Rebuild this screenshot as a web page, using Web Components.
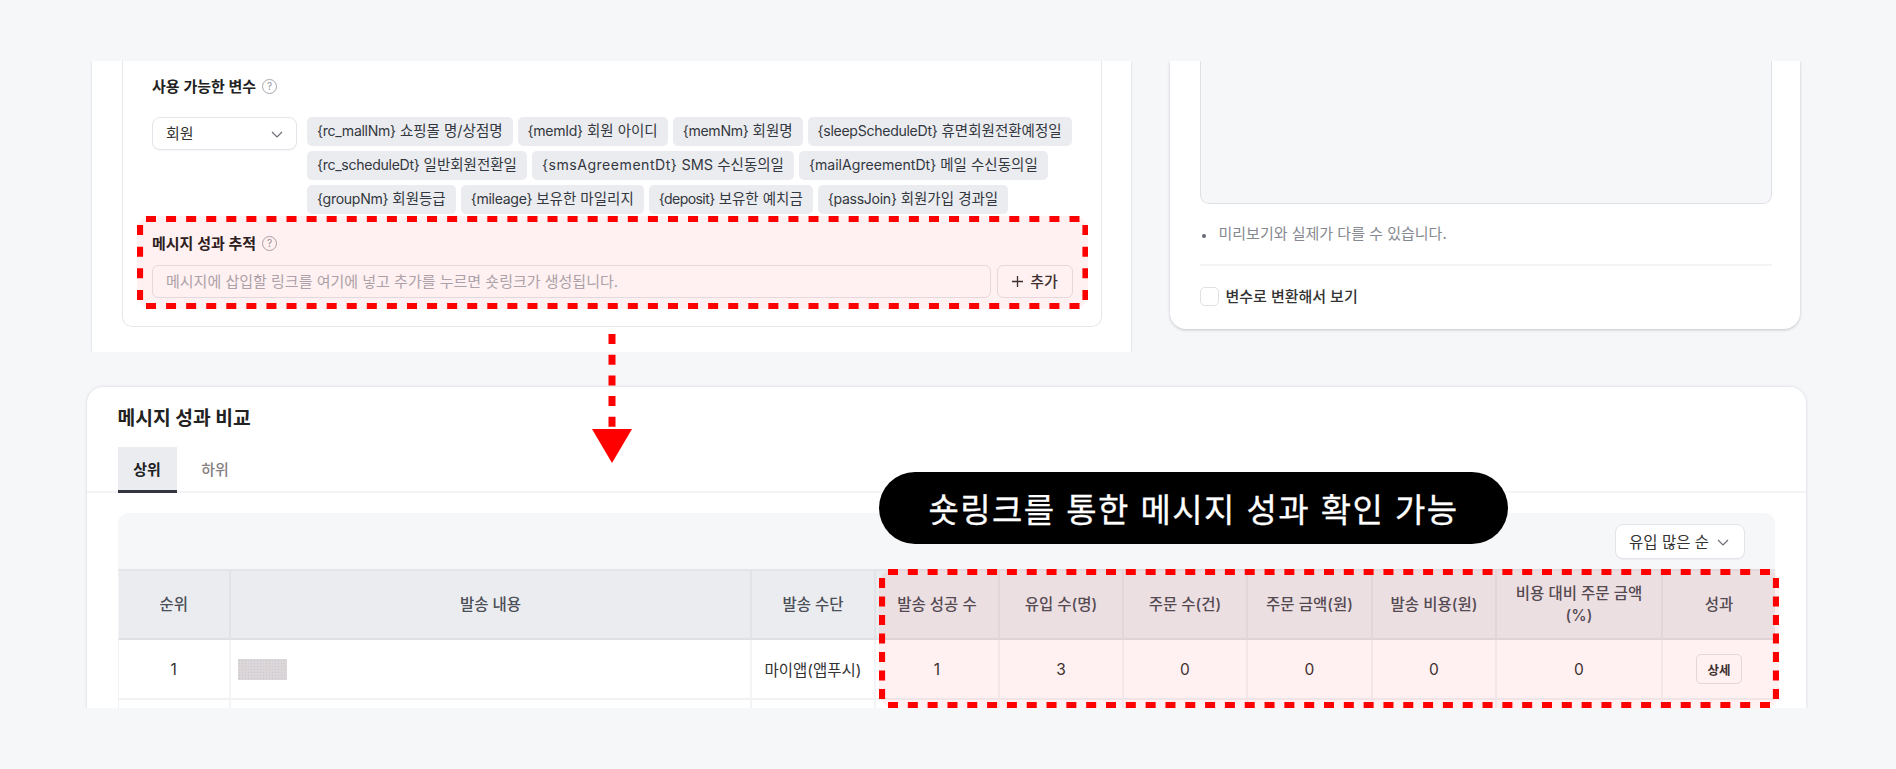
<!DOCTYPE html>
<html lang="ko">
<head>
<meta charset="utf-8">
<title>메시지 성과</title>
<style>
  html, body { margin: 0; height: 769px; overflow: hidden; background: #f6f7f9; }
  body { font-family: "Inter", "Noto Sans CJK KR", sans-serif; color: #222; }
</style>
</head>
<body>
<guide-page>
  <section-card slot="left" variant="flush">
    <vars-panel></vars-panel>
  </section-card>
  <section-card slot="right" variant="preview">
    <preview-panel></preview-panel>
  </section-card>
  <section-card slot="bottom" variant="clip">
    <compare-panel></compare-panel>
  </section-card>

  <dash-box slot="over" style="left:136.5px;top:216px" w="951.5" h="93"></dash-box>
  <dash-box slot="over" style="left:879px;top:569px" w="900" h="139"></dash-box>
  <flow-arrow slot="over" style="left:592px;top:334px"></flow-arrow>
  <callout-pill slot="over" style="left:879px;top:472px">숏링크를 통한 메시지 성과 확인 가능</callout-pill>
</guide-page>

<script>
class GuidePage extends HTMLElement {
  constructor() {
    super();
    this.attachShadow({mode: 'open'});
    this.shadowRoot.innerHTML = `
      <style>
        :host { display: block; position: relative; width: 1896px; height: 769px; overflow: hidden; padding-top: 61px; box-sizing: border-box; }
        .top { display: flex; gap: 39px; align-items: flex-start; padding-left: 92px; }
        .bottom { margin: 35px 0 0 86.5px; }
      </style>
      <div class="top">
        <slot name="left"></slot>
        <slot name="right"></slot>
      </div>
      <div class="bottom"><slot name="bottom"></slot></div>
      <slot name="over"></slot>
    `;
  }
}

class SectionCard extends HTMLElement {
  constructor() {
    super();
    this.attachShadow({mode: 'open'});
    this.shadowRoot.innerHTML = `
      <style>
        :host { display: block; box-sizing: border-box; background: #fff; }
        :host([variant="flush"]) { width: 1039px; height: 291px; box-shadow: 0 0 2px rgba(60,70,90,.22); clip-path: inset(0 -4px); }
        :host([variant="preview"]) { width: 630px; height: 268px; border-radius: 0 0 16px 16px; box-shadow: 0 1px 3px rgba(60,70,90,.28); clip-path: inset(0 -4px -6px); }
        :host([variant="clip"]) { width: 1719.5px; height: 321px; border-radius: 16px 16px 0 0; box-shadow: 0 0 3px rgba(60,70,90,.2); clip-path: inset(-4px -4px 0); overflow: hidden; }
      </style>
      <slot></slot>
    `;
  }
}

class HelpIcon extends HTMLElement {
  constructor() {
    super();
    this.attachShadow({mode: 'open'});
    this.shadowRoot.innerHTML = `
      <style>
        :host { display: inline-flex; align-items: center; justify-content: center; box-sizing: border-box; width: 15px; height: 15px; border: 1px solid #a3a7ae; border-radius: 50%; color: #8f939b; font-size: 10px; font-weight: 400; line-height: 1; }
      </style>?`;
  }
}

class DropSelect extends HTMLElement {
  constructor() {
    super();
    this.attachShadow({mode: 'open'});
    this.shadowRoot.innerHTML = `
      <style>
        :host { display: flex; align-items: center; justify-content: space-between; box-sizing: border-box; background: #fff; border: 1px solid #e4e5ea; border-radius: 8px; font-size: 15px; color: #333; box-shadow: 0 1px 1px rgba(60,70,90,.05); white-space: nowrap; }
        span { position: relative; top: -1px; }
        svg { width: 12px; height: 12px; fill: none; stroke: #666a72; stroke-width: 1.1; flex: none; }
      </style>
      <span><slot></slot></span>
      <svg viewBox="0 0 12 12"><path d="M1 4l5 5 5-5"/></svg>
    `;
  }
}

class VarChip extends HTMLElement {
  constructor() {
    super();
    this.attachShadow({mode: 'open'});
  }
  connectedCallback() {
    this.shadowRoot.innerHTML = `
      <style>
        :host { display: inline-block; box-sizing: border-box; height: 29px; padding: 0 10px; line-height: 27px; font-size: 14.500px; background: #ebecf0; border-radius: 5px; color: #333840; white-space: nowrap; }
        span { font-size: 14.100px; letter-spacing: var(--code-spacing, -.3px); }
      </style>
      <span>${this.getAttribute('code')}</span> <slot></slot>
    `;
  }
}

class VarsPanel extends HTMLElement {
  constructor() {
    super();
    this.attachShadow({mode: 'open'});
    const chips = [
      ['{rc_mallNm}', '쇼핑몰 명/상점명'], ['{memId}', '회원 아이디'], ['{memNm}', '회원명'], ['{sleepScheduleDt}', '휴면회원전환예정일'],
      ['{rc_scheduleDt}', '일반회원전환일'], ['{smsAgreementDt}', 'SMS 수신동의일', '.5px'], ['{mailAgreementDt}', '메일 수신동의일', '0'],
      ['{groupNm}', '회원등급'], ['{mileage}', '보유한 마일리지'], ['{deposit}', '보유한 예치금', '-.6px'], ['{passJoin}', '회원가입 경과일']
    ].map(c => `<var-chip code="${c[0]}"${c[2] ? ` style="--code-spacing:${c[2]}"` : ''}>${c[1]}</var-chip>`).join('');
    this.shadowRoot.innerHTML = `
      <style>
        :host { display: block; box-sizing: border-box; margin-left: 30px; width: 980px; height: 266px; padding: 14px 29px 0; border: 1px solid #e6e7eb; border-top: 0; border-radius: 0 0 10px 10px; }
        .label { display: flex; align-items: center; gap: 6px; height: 20px; font-size: 15px; font-weight: 600; color: #222; }
        help-icon { position: relative; top: 1px; }
        .vars { display: flex; gap: 10px; margin-top: 22px; }
        drop-select { width: 145px; height: 33px; padding: 0 13px; flex: none; }
        .chips { display: flex; flex-wrap: wrap; gap: 5px; width: 785px; }
        .msg { margin-top: 18px; }
        .field { display: flex; gap: 6px; margin-top: 13px; }
        .input { flex: none; width: 839px; height: 33px; box-sizing: border-box; padding: 0 13px 2px; display: flex; align-items: center; border: 1px solid #e4e5ea; border-radius: 6px; font-size: 15px; color: #a8abb2; }
        .add { flex: none; width: 76px; height: 33px; box-sizing: border-box; display: flex; align-items: center; justify-content: center; gap: 7px; padding-bottom: 2px; border: 1px solid #e4e5ea; border-radius: 6px; font-size: 15px; font-weight: 500; color: #333; }
        .add svg { width: 11px; height: 11px; stroke: #333; stroke-width: 1.3; margin-top: 2px; }
      </style>
      <div class="label">사용 가능한 변수 <help-icon></help-icon></div>
      <div class="vars">
        <drop-select>회원</drop-select>
        <div class="chips">${chips}</div>
      </div>
      <div class="msg">
        <div class="label">메시지 성과 추적 <help-icon></help-icon></div>
        <div class="field">
          <div class="input">메시지에 삽입할 링크를 여기에 넣고 추가를 누르면 숏링크가 생성됩니다.</div>
          <div class="add"><svg viewBox="0 0 11 11"><path d="M5.500 0v11M0 5.500h11"/></svg>추가</div>
        </div>
      </div>
    `;
  }
}

class PreviewPanel extends HTMLElement {
  constructor() {
    super();
    this.attachShadow({mode: 'open'});
    this.shadowRoot.innerHTML = `
      <style>
        :host { display: block; padding: 0 28.5px 0 29.500px; }
        .frame { height: 143px; background: #f6f7f9; border: 1px solid #dfe1e5; border-top: 0; border-radius: 0 0 9px 9px; box-sizing: border-box; }
        ul { margin: 20px 0 0; padding: 0; list-style: none; height: 20px; }
        li { position: relative; padding-left: 19px; font-size: 15px; line-height: 20px; color: #85888f; }
        li::before { content: ""; position: absolute; left: 2px; top: 10px; width: 4px; height: 4px; border-radius: 50%; background: #666a72; }
        hr { border: 0; height: 2px; background: #f3f4f6; margin: 20px 0 19px; }
        label { display: flex; align-items: center; gap: 7px; font-size: 15px; font-weight: 500; color: #333; height: 20px; }
        i { display: block; width: 19px; height: 19px; box-sizing: border-box; border: 1px solid #dfe1e5; border-radius: 5px; background: #fff; position: relative; top: 1px; }
      </style>
      <div class="frame"></div>
      <ul><li>미리보기와 실제가 다를 수 있습니다.</li></ul>
      <hr>
      <label><i></i>변수로 변환해서 보기</label>
    `;
  }
}

class PerfTable extends HTMLElement {
  constructor() {
    super();
    this.attachShadow({mode: 'open'});
    const heads = ['순위', '발송 내용', '발송 수단', '발송 성공 수', '유입 수(명)', '주문 수(건)', '주문 금액(원)', '발송 비용(원)', '비용 대비 주문 금액 (%)', '성과'];
    const widths = [113.5, 521, 124, 124, 124, 124, 125, 124, 166, 112];
    const row = ['1', '<span class="mask"></span>', '마이앱(앱푸시)', '1', '3', '0', '0', '0', '0', '<span class="detail">상세</span>'];
    const col = widths.map(w => `<col style="width:${w}px">`).join('');
    this.shadowRoot.innerHTML = `
      <style>
        :host { display: block; }
        table { table-layout: fixed; border-collapse: separate; border-spacing: 0; width: 1657.5px; }
        th { height: 71px; box-sizing: border-box; padding: 0 8px; background: #ebecf0; border-top: 2px solid #e4e5e9; border-bottom: 2px solid #dfe0e5; border-right: 2px solid #e2e3e7; font-size: 15.500px; font-weight: 500; line-height: 22px; color: #4b4f57; text-align: center; }
        td { height: 60px; box-sizing: border-box; padding: 0 6px; background: #fff; border-bottom: 2px solid #f1f2f4; border-right: 2px solid #f3f4f6; font-size: 15.500px; color: #333; text-align: center; }
        td.left { text-align: left; padding-left: 7px; }
        tr > :first-child { border-left: 1px solid #f1f2f4; }
        tr > :last-child { border-right: 0; }
        .mask { display: block; width: 49px; height: 21px; background-color: #dcd6d9; background-image: radial-gradient(#c3cad6 .6px, transparent .7px); background-size: 3px 3px; }
        .detail { display: inline-flex; align-items: center; justify-content: center; width: 46px; height: 30px; box-sizing: border-box; border: 1px solid #e2e3e7; border-radius: 5px; background: #fff; font-size: 12.500px; font-weight: 600; color: #333; vertical-align: middle; }
      </style>
      <table>
        <colgroup>${col}</colgroup>
        <tr>${heads.map(h => `<th>${h}</th>`).join('')}</tr>
        <tr>${row.map((c, i) => `<td class="${i === 1 ? 'left' : ''}">${c}</td>`).join('')}</tr>
        <tr>${row.map(() => '<td></td>').join('')}</tr>
      </table>
    `;
  }
}

class ComparePanel extends HTMLElement {
  constructor() {
    super();
    this.attachShadow({mode: 'open'});
    this.shadowRoot.innerHTML = `
      <style>
        :host { display: block; }
        h2 { margin: 0; padding: 18px 0 0 31px; height: 60px; box-sizing: border-box; font-size: 19.300px; line-height: 26px; font-weight: 700; color: #222; }
        .tabs { display: flex; padding-left: 31px; height: 46px; box-sizing: border-box; border-bottom: 2px solid #f3f4f6; }
        .tab { width: 59px; height: 46px; box-sizing: border-box; display: flex; align-items: center; justify-content: center; font-size: 15px; padding-bottom: 4px; }
        .tab.on { background: #ebecf0; border-bottom: 3px solid #333640; padding-bottom: 1px; font-weight: 700; color: #222; }
        .tab.off { margin-left: 9px; color: #85807f; font-weight: 500; }
        .wrap { margin: 20px 0 0 31px; width: 1657.5px; background: #f6f7f9; border-radius: 10px 10px 0 0; }
        .bar { display: flex; justify-content: flex-end; padding: 11px 30px 0 0; height: 56px; box-sizing: border-box; }
        drop-select { width: 130px; height: 35px; padding: 0 15px 0 13px; font-size: 15.500px; }
      </style>
      <h2>메시지 성과 비교</h2>
      <div class="tabs"><div class="tab on">상위</div><div class="tab off">하위</div></div>
      <div class="wrap">
        <div class="bar"><drop-select>유입 많은 순</drop-select></div>
        <perf-table></perf-table>
      </div>
    `;
  }
}

// red dashed frame drawn over the screenshot, sides are separate so dashes start past the corners
class DashBox extends HTMLElement {
  constructor() {
    super();
    this.attachShadow({mode: 'open'});
  }
  side(x1, y1, x2, y2) {
    const len = Math.abs(x2 - x1) + Math.abs(y2 - y1);
    const n = Math.round((len + 10) / 20);
    const gap = (len - n * 10) / (n - 1);
    return `<line x1="${x1}" y1="${y1}" x2="${x2}" y2="${y2}" stroke-dasharray="10 ${gap}"/>`;
  }
  connectedCallback() {
    const w = +this.getAttribute('w');
    const h = +this.getAttribute('h');
    this.shadowRoot.innerHTML = `
      <style>
        :host { display: block; position: absolute; pointer-events: none; }
        svg { display: block; }
        line { stroke: #ff0000; stroke-width: 6.2; }
      </style>
      <svg width="${w}" height="${h}" viewBox="0 0 ${w} ${h}">
        <rect width="${w}" height="${h}" rx="15" fill="#ff0000" fill-opacity=".055"/>
        ${this.side(9, 3, w - 9, 3)}${this.side(9, h - 3, w - 9, h - 3)}
        ${this.side(3, 9, 3, h - 9)}${this.side(w - 3, 9, w - 3, h - 9)}
      </svg>
    `;
  }
}

class FlowArrow extends HTMLElement {
  constructor() {
    super();
    this.attachShadow({mode: 'open'});
    this.shadowRoot.innerHTML = `
      <style>
        :host { display: block; position: absolute; width: 40px; height: 129px; }
        svg { display: block; }
      </style>
      <svg width="40" height="129" viewBox="0 0 40 129">
        <line x1="20" y1="0" x2="20" y2="95" stroke="#ff0000" stroke-width="7" stroke-dasharray="10 10.700"/>
        <path d="M0 95h40l-20 34z" fill="#ff0000"/>
      </svg>
    `;
  }
}

class CalloutPill extends HTMLElement {
  constructor() {
    super();
    this.attachShadow({mode: 'open'});
    this.shadowRoot.innerHTML = `
      <style>
        :host { display: flex; position: absolute; width: 629px; height: 72px; align-items: center; justify-content: center; background: #000; border-radius: 36px; color: #fff; font-size: 33px; font-weight: 400; -webkit-text-stroke: .3px #fff; letter-spacing: 1.400px; white-space: nowrap; }
      </style>
      <slot></slot>
    `;
  }
}

customElements.define('guide-page', GuidePage);
customElements.define('section-card', SectionCard);
customElements.define('help-icon', HelpIcon);
customElements.define('drop-select', DropSelect);
customElements.define('var-chip', VarChip);
customElements.define('vars-panel', VarsPanel);
customElements.define('preview-panel', PreviewPanel);
customElements.define('perf-table', PerfTable);
customElements.define('compare-panel', ComparePanel);
customElements.define('dash-box', DashBox);
customElements.define('flow-arrow', FlowArrow);
customElements.define('callout-pill', CalloutPill);
</script>
</body>
</html>
